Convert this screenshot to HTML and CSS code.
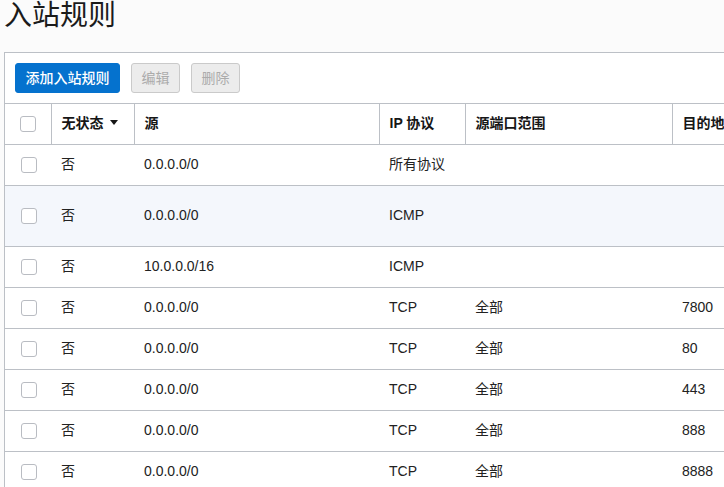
FILE: index.html
```html
<!DOCTYPE html>
<html lang="zh-CN">
<head>
<meta charset="utf-8">
<link rel="stylesheet" href="styles.css">
</head>
<body>
<h1 class="title">入站规则</h1>
<div class="card">
  <div class="toolbar">
    <button class="btn btn-primary">添加入站规则</button>
    <button class="btn btn-disabled">编辑</button>
    <button class="btn btn-disabled">删除</button>
  </div>
  <table class="rules">
    <colgroup>
      <col class="c-check"><col class="c-state"><col class="c-src"><col class="c-ip"><col class="c-port"><col class="c-dst">
    </colgroup>
    <thead>
      <tr>
        <th class="chk"><span class="box"></span></th>
        <th>无状态<span class="caret"></span></th>
        <th>源</th>
        <th>IP 协议</th>
        <th>源端口范围</th>
        <th>目的地端口范围</th>
      </tr>
    </thead>
    <tbody>
      <tr><td class="chk"><span class="box"></span></td><td>否</td><td>0.0.0.0/0</td><td>所有协议</td><td></td><td></td></tr>
      <tr class="hl"><td class="chk"><span class="box"></span></td><td>否</td><td>0.0.0.0/0</td><td>ICMP</td><td></td><td></td></tr>
      <tr><td class="chk"><span class="box"></span></td><td>否</td><td>10.0.0.0/16</td><td>ICMP</td><td></td><td></td></tr>
      <tr><td class="chk"><span class="box"></span></td><td>否</td><td>0.0.0.0/0</td><td>TCP</td><td>全部</td><td>7800</td></tr>
      <tr><td class="chk"><span class="box"></span></td><td>否</td><td>0.0.0.0/0</td><td>TCP</td><td>全部</td><td>80</td></tr>
      <tr><td class="chk"><span class="box"></span></td><td>否</td><td>0.0.0.0/0</td><td>TCP</td><td>全部</td><td>443</td></tr>
      <tr><td class="chk"><span class="box"></span></td><td>否</td><td>0.0.0.0/0</td><td>TCP</td><td>全部</td><td>888</td></tr>
      <tr><td class="chk"><span class="box"></span></td><td>否</td><td>0.0.0.0/0</td><td>TCP</td><td>全部</td><td>8888</td></tr>
    </tbody>
  </table>
</div>
</body>
</html>
```

FILE: styles.css
```css
html, body {
  margin: 0;
  padding: 0;
  background: #fbfbfb;
  overflow: hidden;
}
body {
  font-family: "Liberation Sans", Arial, "Noto Sans CJK SC", sans-serif;
  font-size: 14px;
  color: #222;
  width: 1000px;
}
.title {
  margin: 0;
  padding-left: 4px;
  font-size: 28px;
  line-height: 32px;
  font-weight: normal;
  color: #1b1b1b;
  height: 52px;
}
.card {
  margin-left: 4px;
  width: 960px;
  background: #fff;
  border: 1px solid #bcc0c6;
  border-right: none;
}
.toolbar {
  display: flex;
  gap: 11px;
  padding: 10px;
}
.btn {
  font-family: inherit;
  font-size: 14px;
  height: 30px;
  padding: 0;
  border-radius: 3px;
  line-height: 26px;
  white-space: nowrap;
  text-align: center;
}
.btn-primary {
  background: #0572ce;
  border: 1px solid #0572ce;
  color: #fff;
  font-weight: 500;
  width: 105px;
}
.btn-disabled {
  background: #ececec;
  border: 1px solid #cacaca;
  color: #ababab;
  width: 49px;
}
.rules {
  border-collapse: collapse;
  table-layout: fixed;
  width: 960px;
}
.c-check { width: 46px; }
.c-state { width: 83px; }
.c-src { width: 245px; }
.c-ip { width: 86px; }
.c-port { width: 207px; }
.c-dst { width: 293px; }
.rules th, .rules td {
  text-align: left;
  padding: 0 0 3px 10px;
  height: 37px;
  line-height: 16px;
  border-top: 1px solid #bcc0c6;
  white-space: nowrap;
  vertical-align: middle;
}
.rules th {
  font-weight: bold;
  color: #161616;
  border-left: 1px solid #bcc0c6;
}
.rules th:first-child { border-left: none; }
.rules td { color: #222; }
.rules .chk {
  padding: 0;
  text-align: center;
  line-height: 0;
}
.rules tbody tr:last-child td { border-bottom: 1px solid #bcc0c6; }
.rules tr.hl td {
  background: #f4f7fc;
  height: 57px;
}
.rules tr.hl td.chk { height: 60px; }
.box {
  display: inline-block;
  width: 14px;
  height: 14px;
  border: 1px solid #b9bcc2;
  border-radius: 3px;
  background: #fff;
  vertical-align: middle;
  margin-left: 1px;
}
.caret {
  display: inline-block;
  width: 0;
  height: 0;
  border-left: 4.5px solid transparent;
  border-right: 4.5px solid transparent;
  border-top: 5px solid #161616;
  margin-left: 6px;
  vertical-align: middle;
  position: relative;
  top: -1px;
}
```
